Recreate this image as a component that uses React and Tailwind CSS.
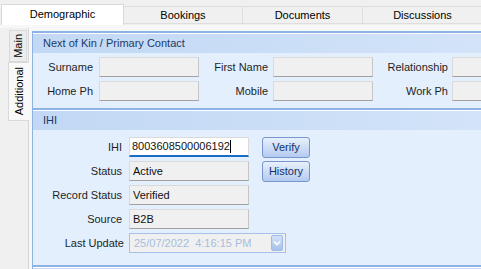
import React from 'react';

const Field = ({ className = '', children }) => (
  <div
    className={`h-[20px] shrink-0 bg-[#f0f0f0] border border-[#dadada] border-r-[#c6c6c6] border-b-[#a0a0a0] flex items-center px-[3px] text-[#111] ${className}`}
  >
    {children}
  </div>
);

const Label = ({ className = '', children }) => (
  <span className={`shrink-0 text-right text-[#1e1e1e] ${className}`}>{children}</span>
);

const BlueButton = ({ children }) => (
  <button className="ml-[13px] -my-px w-[48px] h-[21px] shrink-0 rounded-[3px] border border-[#7895cf] bg-gradient-to-b from-[#e8f0fc] to-[#b4cbef] text-[#15306b] leading-none">
    {children}
  </button>
);

const SectionHeader = ({ title }) => (
  <div className="h-[20px] border-t border-white bg-gradient-to-r from-[#c2d8f4] via-[#c9ddf6] to-[#d3e4f9] flex items-center pl-[10px] text-[#1c3a68]">
    {title}
  </div>
);

const Tab = ({ label, className = '' }) => (
  <div
    className={`h-[18px] mb-[1px] shrink-0 bg-[#f0f0f0] border-t border-r border-b border-[#dedede] flex items-center justify-center text-black ${className}`}
  >
    {label}
  </div>
);

export default function App() {
  return (
    <div className="w-[481px] h-[269px] overflow-hidden bg-[#f0f0f0] flex flex-col text-[11px] font-['Liberation_Sans',Arial,sans-serif]">
      {/* top tabs */}
      <div className="h-[25px] shrink-0 flex items-end">
        <div className="ml-[1px] w-[123px] h-[21px] shrink-0 bg-white border border-b-0 border-[#d9d9d9] flex items-center justify-center pb-[1px] text-black">
          Demographic
        </div>
        <Tab label="Bookings" className="w-[119px] pt-[1px]" />
        <Tab label="Documents" className="w-[120px] pt-[1px]" />
        <Tab label="Discussions" className="w-[120px] pt-[1px]" />
      </div>

      {/* tab page */}
      <div className="flex-1 flex bg-[#f7f7f7] pt-[3px] min-h-0">
        {/* vertical tabs */}
        <div className="w-[29px] shrink-0 bg-[#f0f0f0] border-r border-[#d6d6d6] pt-[2px] flex flex-col">
          <div className="ml-[9px] w-[18px] h-[32px] bg-[#ececec] border border-[#d9d9d9] flex items-center justify-center text-black">
            <span className="[writing-mode:vertical-rl] rotate-180">Main</span>
          </div>
          <div className="ml-[8px] w-[21px] h-[59px] -mr-px bg-[#f9f9f9] border border-r-0 border-[#d9d9d9] flex items-center justify-center text-black">
            <span className="[writing-mode:vertical-rl] rotate-180">Additional</span>
          </div>
        </div>

        {/* panel */}
        <div className="ml-[3px] mt-[3px] flex-1 min-w-0 overflow-hidden bg-[#e3effd] border-l border-t-2 border-[#8db2e4] flex flex-col">
          {/* Next of Kin */}
          <div className="border-b-2 border-[#8db2e4]">
            <SectionHeader title="Next of Kin / Primary Contact" />
            <div className="pt-[4px] pb-[7px] flex flex-col gap-[4px]">
              <div className="flex items-center">
                <Label className="w-[60px]">Surname</Label>
                <Field className="ml-[6px] w-[100px]" />
                <Label className="w-[69px]">First Name</Label>
                <Field className="ml-[5px] w-[100px]" />
                <Label className="w-[75px]">Relationship</Label>
                <Field className="ml-[4px] w-[100px]" />
              </div>
              <div className="flex items-center">
                <Label className="w-[60px]">Home Ph</Label>
                <Field className="ml-[6px] w-[100px]" />
                <Label className="w-[69px]">Mobile</Label>
                <Field className="ml-[5px] w-[100px]" />
                <Label className="w-[75px]">Work Ph</Label>
                <Field className="ml-[4px] w-[100px]" />
              </div>
            </div>
          </div>

          {/* IHI */}
          <div className="border-b-2 border-[#8db2e4]">
            <SectionHeader title="IHI" />
            <div className="pt-[7px] pb-[12px] flex flex-col gap-[4px]">
              <div className="flex items-center">
                <Label className="w-[89px]">IHI</Label>
                <div className="ml-[7px] w-[120px] h-[20px] shrink-0 bg-white border border-[#dadada] border-b-2 border-b-[#1a6dc4] flex items-center px-[2px] text-[#111]">
                  <span>8003608500006192</span>
                  <span className="w-px h-[13px] bg-black" />
                </div>
                <BlueButton>Verify</BlueButton>
              </div>
              <div className="flex items-center">
                <Label className="w-[89px]">Status</Label>
                <Field className="ml-[7px] w-[120px]">Active</Field>
                <BlueButton>History</BlueButton>
              </div>
              <div className="flex items-center">
                <Label className="w-[89px]">Record Status</Label>
                <Field className="ml-[7px] w-[120px]">Verified</Field>
              </div>
              <div className="flex items-center">
                <Label className="w-[89px]">Source</Label>
                <Field className="ml-[7px] w-[120px]">B2B</Field>
              </div>
              <div className="flex items-center">
                <Label className="w-[91px]">Last Update</Label>
                <div className="ml-[5px] w-[157px] h-[20px] shrink-0 bg-[#f0f0f0] border border-[#a6c0e8] flex items-center pl-[4px] pr-[2px] text-[#a8bde0]">
                  <span className="flex-1 whitespace-pre">25/07/2022  4:16:15 PM</span>
                  <span className="w-[12px] h-[16px] rounded-[2px] border border-[#9fbae6] bg-gradient-to-b from-[#d3e2f7] to-[#a7c1ea] flex items-center justify-center">
                    <svg width="8" height="6" viewBox="0 0 8 6">
                      <path d="M1 1.5 L4 4.5 L7 1.5" fill="none" stroke="white" strokeWidth="1.6" />
                    </svg>
                  </span>
                </div>
              </div>
            </div>
          </div>
          <div className="flex-1 border-t border-white bg-[#c8dcf5]" />
        </div>
      </div>
    </div>
  );
}
